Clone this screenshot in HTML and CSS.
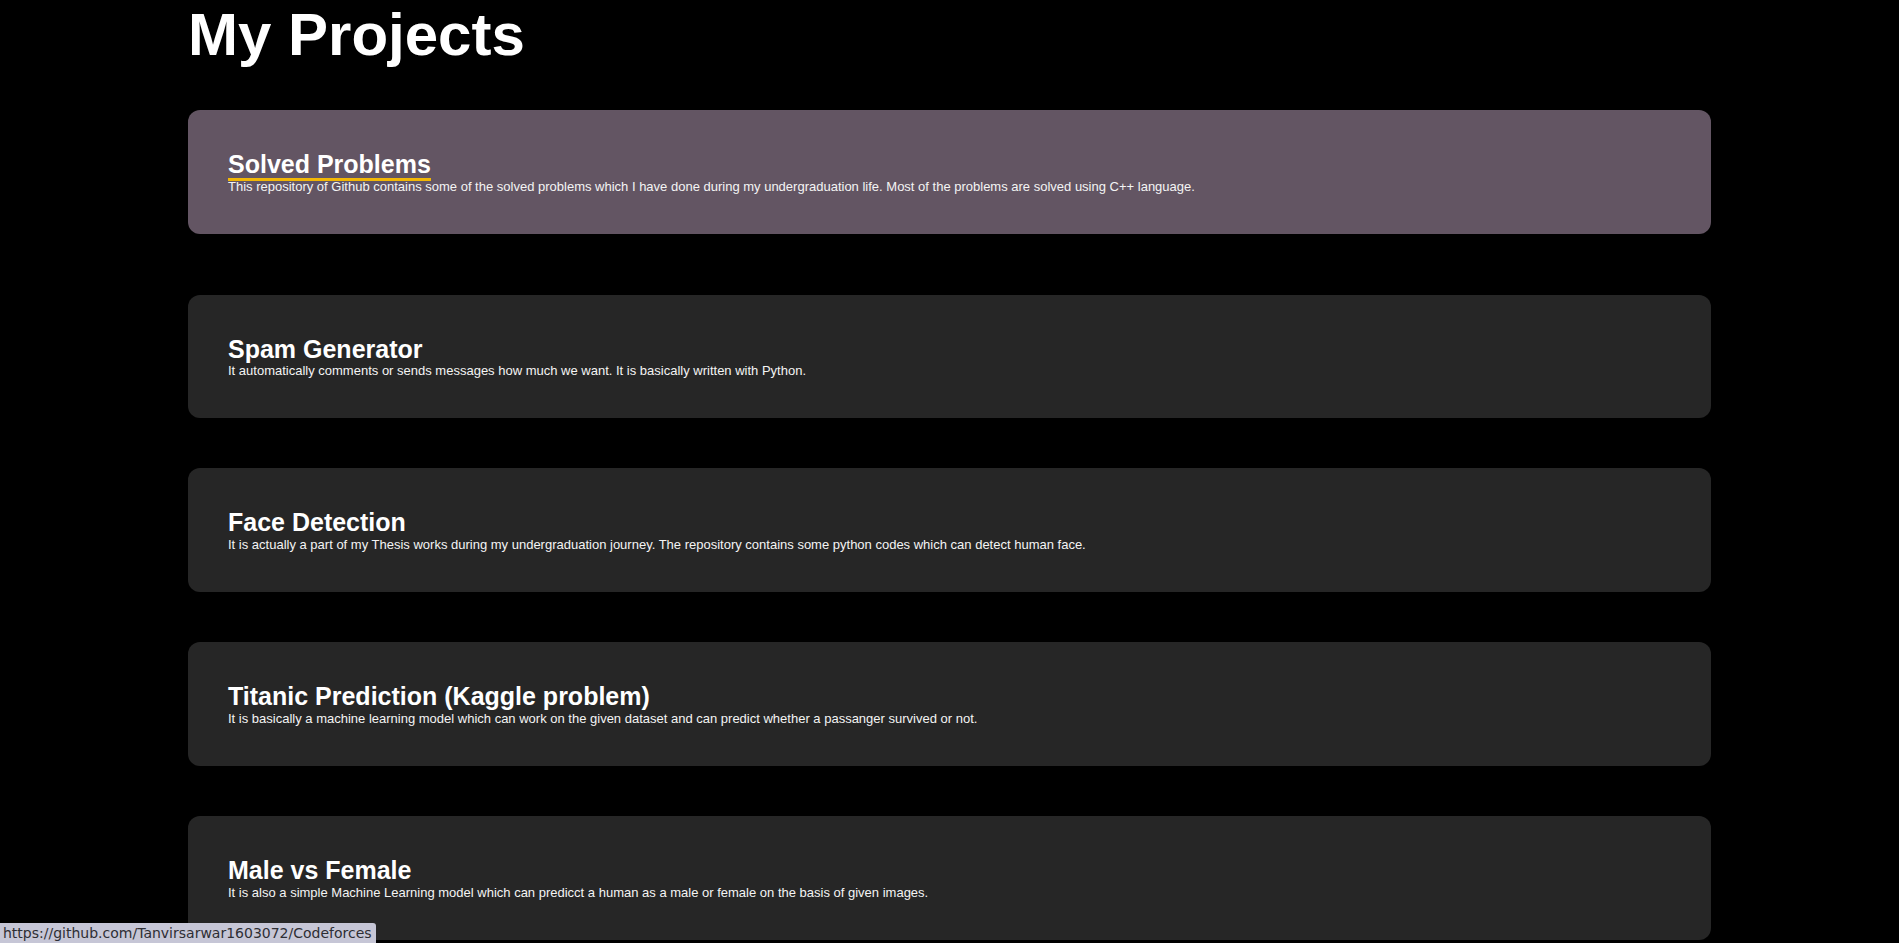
FILE: index.html
```html
<!DOCTYPE html>
<html lang="en">
<head>
<meta charset="utf-8">
<title>My Projects</title>
<link rel="stylesheet" href="styles.css">
</head>
<body>
<main class="projects">
  <h1 class="projects-title">My Projects</h1>
  <div class="project-list">
    <a class="card is-hovered" href="https://github.com/Tanvirsarwar1603072/Codeforces">
      <h2 class="card-title">Solved Problems</h2>
      <p class="card-text">This repository of Github contains some of the solved problems which I have done during my undergraduation life. Most of the problems are solved using C++ language.</p>
    </a>
    <a class="card" href="#">
      <h2 class="card-title">Spam Generator</h2>
      <p class="card-text">It automatically comments or sends messages how much we want. It is basically written with Python.</p>
    </a>
    <a class="card" href="#">
      <h2 class="card-title">Face Detection</h2>
      <p class="card-text">It is actually a part of my Thesis works during my undergraduation journey. The repository contains some python codes which can detect human face.</p>
    </a>
    <a class="card" href="#">
      <h2 class="card-title">Titanic Prediction (Kaggle problem)</h2>
      <p class="card-text">It is basically a machine learning model which can work on the given dataset and can predict whether a passanger survived or not.</p>
    </a>
    <a class="card" href="#">
      <h2 class="card-title">Male vs Female</h2>
      <p class="card-text">It is also a simple Machine Learning model which can predicct a human as a male or female on the basis of given images.</p>
    </a>
  </div>
</main>
<div class="status-bubble">https://github.com/Tanvirsarwar1603072/Codeforces</div>
</body>
</html>
```

FILE: styles.css
```css
html, body {
  margin: 0;
  padding: 0;
  background: #000;
  overflow: hidden;
}

body {
  font-family: "Liberation Sans", Arial, sans-serif;
  color: #fff;
}

.projects {
  width: 1523px;
  margin: 0 auto;
  padding-top: 0;
}

.projects-title {
  margin: 0 0 52px 0;
  font-size: 60px;
  font-weight: 700;
  line-height: 69px;
  color: #fff;
}

.project-list {
  display: flex;
  flex-direction: column;
  gap: 50px;
}

.card {
  display: block;
  padding: 40px;
  background: #262626;
  border-radius: 12px;
  color: #fff;
  text-decoration: none;
}

.card.is-hovered {
  background: #635563;
  transform: translateY(-11px);
}

.card-title {
  position: relative;
  display: inline-block;
  margin: 0;
  font-size: 25px;
  font-weight: 700;
  line-height: 28.7px;
  color: #fff;
}

.card.is-hovered .card-title::after {
  content: "";
  position: absolute;
  left: 0;
  bottom: -2px;
  width: 100%;
  height: 3px;
  background: #f2b705;
}

.card-text {
  margin: 0;
  font-size: 13px;
  line-height: 15px;
  color: #f4f4f4;
}

.status-bubble {
  position: fixed;
  left: 0;
  bottom: 0;
  height: 20px;
  padding: 0 4px 0 3px;
  background: #c6c6d6;
  color: #2e2e34;
  font-family: "DejaVu Sans", sans-serif;
  font-size: 14px;
  line-height: 20px;
  border-top-right-radius: 3px;
}
```
